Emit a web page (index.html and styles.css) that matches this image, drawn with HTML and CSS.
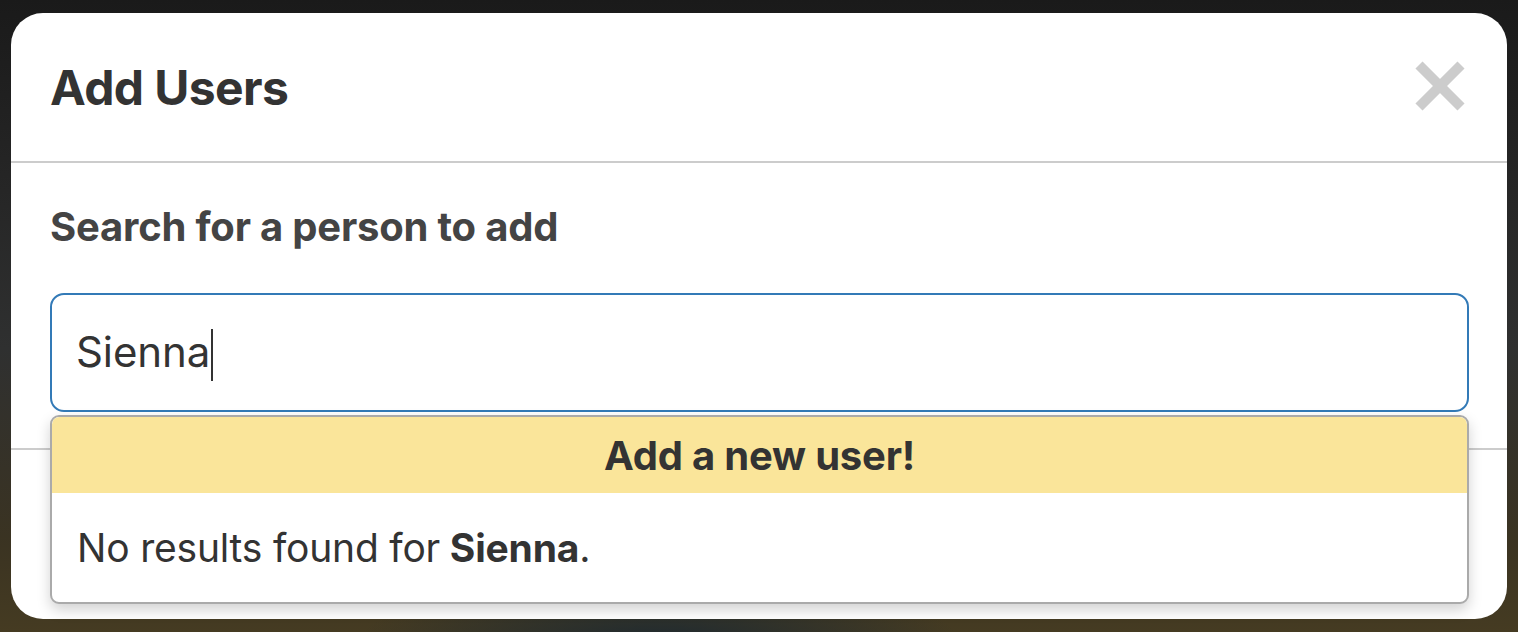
FILE: index.html
```html
<!DOCTYPE html>
<html lang="en">
<head>
<meta charset="utf-8">
<title>Add Users</title>
<link rel="stylesheet" href="styles.css">
</head>
<body>
<div class="backdrop">
  <div class="modal">
    <div class="modal-header">
      <h1 class="modal-title">Add Users</h1>
      <button class="close" aria-label="Close">
        <svg width="50" height="50" viewBox="0 0 50 50" aria-hidden="true">
          <line x1="4" y1="4" x2="46" y2="46" stroke="#cccccc" stroke-width="10"/>
          <line x1="46" y1="4" x2="4" y2="46" stroke="#cccccc" stroke-width="10"/>
        </svg>
      </button>
    </div>
    <div class="modal-body">
      <label class="field-label">Search for a person to add</label>
      <div class="search-wrap">
        <div class="search-input">Sienna<span class="caret"></span></div>
        <div class="dropdown">
          <div class="dropdown-add">Add a new user!</div>
          <div class="dropdown-empty">No results found for <strong>Sienna</strong>.</div>
        </div>
      </div>
    </div>
    <div class="modal-footer"></div>
  </div>
</div>
</body>
</html>
```

FILE: styles.css
```css
html, body {
  margin: 0;
  padding: 0;
}
body {
  width: 1518px;
  height: 632px;
  overflow: hidden;
  font-family: Inter, "Noto Sans", "Liberation Sans", sans-serif;
  color: #333;
}
.backdrop {
  height: 632px;
  box-sizing: border-box;
  padding: 13px 11px 13px 11px;
  background:
    radial-gradient(ellipse 300px 60px at 660px 640px, #1f2a30 0%, rgba(31,42,48,0) 100%),
    linear-gradient(to bottom, #1a1a1a 0%, #262626 30%, #2f3030 55%, #3a3322 85%, #453b22 100%);
}
.modal {
  background: #fff;
  border-radius: 32px;
  height: 606px;
  display: flex;
  flex-direction: column;
  overflow: visible;
}
.modal-header {
  height: 148px;
  border-bottom: 2px solid #cccccc;
  display: flex;
  align-items: center;
  justify-content: space-between;
  padding: 0 42px 0 39px;
}
.modal-title {
  margin: 0;
  font-size: 48px;
  font-weight: 700;
  line-height: 1;
  color: #333;
  letter-spacing: -0.6px;
  padding-top: 2px;
}
.close {
  border: 0;
  background: none;
  padding: 0;
  width: 50px;
  height: 50px;
  display: block;
  margin-top: -2px;
}
.close svg {
  display: block;
}
.modal-body {
  padding: 40px 38px 36px 39px;
  border-bottom: 2px solid #cccccc;
}
.field-label {
  display: block;
  font-size: 40px;
  font-weight: 700;
  line-height: 48px;
  color: #444;
  letter-spacing: -0.2px;
  margin-bottom: 42px;
}
.search-wrap {
  position: relative;
}
.search-input {
  height: 119px;
  box-sizing: border-box;
  border: 2px solid #337ab7;
  border-radius: 14px;
  display: flex;
  align-items: center;
  padding: 0 0 2px 24px;
  font-size: 42px;
  color: #333;
  letter-spacing: -0.1px;
}
.caret {
  display: inline-block;
  width: 2px;
  height: 52px;
  background: #333;
  margin-left: 1px;
  margin-top: 6px;
}
.dropdown {
  position: absolute;
  top: 122px;
  left: 0;
  right: 0;
  background: #fff;
  border: 2px solid #aaaaaa;
  border-radius: 9px;
  box-shadow: 0 6px 14px rgba(0, 0, 0, 0.18);
  overflow: hidden;
  z-index: 2;
}
.dropdown-add {
  height: 76px;
  background: #fae59a;
  display: flex;
  align-items: center;
  justify-content: center;
  font-size: 40px;
  font-weight: 700;
  color: #333;
  letter-spacing: -0.2px;
  border-radius: 7px 7px 0 0;
}
.dropdown-empty {
  height: 109px;
  display: flex;
  align-items: center;
  padding: 0 0 0 25px;
  font-size: 39px;
  color: #333;
  letter-spacing: -0.2px;
}
.dropdown-empty strong {
  font-weight: 700;
  margin-left: 0.25em;
}
.modal-footer {
  flex: 1;
}
```
